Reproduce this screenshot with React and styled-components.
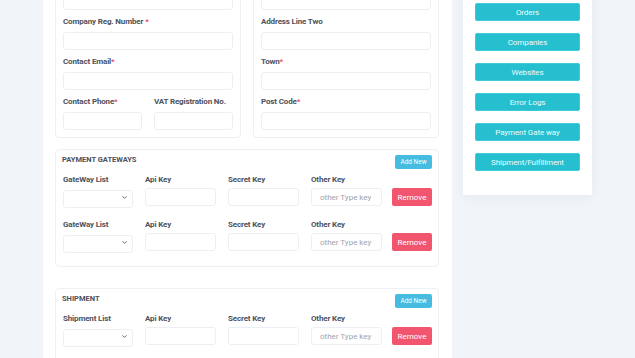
import React from "react";
import styled, { createGlobalStyle } from "styled-components";
import { ChevronDown } from "lucide-react";

const GlobalStyle = createGlobalStyle`
  * { box-sizing: border-box; }
  body {
    margin: 0;
    background: #f1f4f8;
    font-family: "Roboto", "Noto Sans", sans-serif;
    overflow: hidden;
  }
`;

const Page = styled.div`
  display: flex;
  align-items: flex-start;
  gap: 11px;
  padding: 0 43px;
  margin-top: -44px;
`;

const Main = styled.div`
  width: 409px;
  background: #fff;
  padding: 12px 13px 40px 12px;
  display: flex;
  flex-direction: column;
`;

const TwoCols = styled.div`
  display: grid;
  grid-template-columns: minmax(0, 1fr) minmax(0, 1fr);
  gap: 12px;
`;

const Card = styled.div`
  border: 1px solid #edf0f4;
  border-radius: 4px;
  padding: ${(p) => p.$pad || "7px"};
  margin-top: ${(p) => p.$mt || 0}px;
  display: flex;
  flex-direction: column;
  gap: ${(p) => p.$gap || 0}px;
`;

const Field = styled.div`
  display: flex;
  flex-direction: column;
  min-width: 0;
`;

const Label = styled.label`
  font-family: "Roboto", sans-serif;
  font-size: 8px;
  line-height: 12px;
  font-weight: 700;
  letter-spacing: -0.15px;
  color: #4d525c;
  margin-bottom: ${(p) => p.$mb || 4}px;
  white-space: nowrap;
`;

const Req = styled.span`
  color: #f0506e;
  margin-left: ${(p) => (p.$space ? 2 : 0)}px;
`;

const Input = styled.input`
  height: 18px;
  width: 100%;
  border: 1px solid #eceff3;
  border-radius: 3px;
  background: #fff;
  padding: 0 8px;
  font-family: "Roboto", sans-serif;
  font-size: 8px;
  outline: none;
  &::placeholder { color: #9fa3aa; }
`;

const SplitRow = styled.div`
  display: grid;
  grid-template-columns: minmax(0, 1fr) minmax(0, 1fr);
  gap: 12px;
`;

const SelectWrap = styled.div`
  position: relative;
  height: 18px;
  svg {
    position: absolute;
    right: 5px;
    top: 6px;
    color: #555;
    pointer-events: none;
  }
`;

const Select = styled.select`
  appearance: none;
  width: 100%;
  height: 18px;
  border: 1px solid #eceff3;
  border-radius: 3px;
  background: #fff;
  outline: none;
`;

const CardHead = styled.div`
  display: flex;
  justify-content: space-between;
  align-items: flex-start;
`;

const CardTitle = styled.h4`
  margin: 0 0 0 -1px;
  font-family: "Roboto", sans-serif;
  font-size: 7.5px;
  line-height: 10px;
  font-weight: 700;
  color: #4b505c;
`;

const Btn = styled.button`
  flex-shrink: 0;
  border: none;
  border-radius: 2px;
  color: #fff;
  font-family: "Roboto", sans-serif;
  cursor: pointer;
  padding: 0;
  background: ${(p) => p.$bg};
  width: ${(p) => p.$w}px;
  height: ${(p) => p.$h}px;
  font-size: ${(p) => p.$fs}px;
`;

const KeyRow = styled.div`
  display: grid;
  grid-template-columns: 70px 71px 71px 71px minmax(0, 1fr);
  column-gap: 12px;
  align-items: end;
`;

const RemoveCell = styled.div`
  display: flex;
  justify-content: flex-end;
`;

const Rows = styled.div`
  display: flex;
  flex-direction: column;
  gap: 13px;
  margin-top: 5px;
`;

const Side = styled.div`
  width: 129px;
  background: #fff;
  padding: 17px 12px 24px;
  display: flex;
  flex-direction: column;
  gap: 12px;
  box-shadow: 0 3px 12px rgba(40, 60, 90, 0.05);
`;

const SideBtn = styled.button`
  height: 18px;
  border: 1px solid #3fcad8;
  border-radius: 2px;
  background: #25bfcf;
  color: #eefbfc;
  font-family: "Roboto", sans-serif;
  font-size: 8px;
  letter-spacing: -0.1px;
  padding: 0;
`;

const sideItems = ["Dashboard", "Orders", "Companies", "Websites", "Error Logs", "Payment Gate way", "Shipment/Fulfillment"];

function TextField({ label, req, space }) {
  return (
    <Field>
      <Label>
        {label}
        {req && <Req $space={space}>*</Req>}
      </Label>
      <Input />
    </Field>
  );
}

function KeyLine({ listLabel }) {
  return (
    <KeyRow>
      <Field>
        <Label $mb={2}>{listLabel}</Label>
        <SelectWrap>
          <Select />
          <ChevronDown size={7} strokeWidth={3} />
        </SelectWrap>
      </Field>
      <Field>
        <Label $mb={2}>Api Key</Label>
        <Input />
      </Field>
      <Field>
        <Label $mb={2}>Secret Key</Label>
        <Input />
      </Field>
      <Field>
        <Label $mb={2}>Other Key</Label>
        <Input placeholder="other Type key" />
      </Field>
      <RemoveCell>
        <Btn $bg="#f2566f" $w={40} $h={18} $fs={8}>Remove</Btn>
      </RemoveCell>
    </KeyRow>
  );
}

function KeysCard({ title, listLabel, rows, mt }) {
  return (
    <Card $mt={mt} $pad="5px 6px 15px 7px">
      <CardHead>
        <CardTitle>{title}</CardTitle>
        <Btn $bg="#46bce1" $w={37} $h={14} $fs={6.5}>Add New</Btn>
      </CardHead>
      <Rows>
        {Array.from({ length: rows }).map((_, i) => (
          <KeyLine key={i} listLabel={listLabel} />
        ))}
      </Rows>
    </Card>
  );
}

export default function App() {
  return (
    <>
      <GlobalStyle />
      <Page>
        <Main>
          <TwoCols>
            <Card $pad="7px" $gap={6}>
              <TextField label="Company Name" req space />
              <TextField label="Company Reg. Number" req space />
              <TextField label="Contact Email" req />
              <SplitRow>
                <TextField label="Contact Phone" req />
                <TextField label="VAT Registration No." />
              </SplitRow>
            </Card>
            <Card $pad="7px" $gap={6}>
              <TextField label="Address Line One" req />
              <TextField label="Address Line Two" />
              <TextField label="Town" req />
              <TextField label="Post Code" req />
            </Card>
          </TwoCols>
          <KeysCard title="PAYMENT GATEWAYS" listLabel="GateWay List" rows={2} mt={11} />
          <KeysCard title="SHIPMENT" listLabel="Shipment List" rows={2} mt={21} />
        </Main>
        <Side>
          {sideItems.map((s) => (
            <SideBtn key={s}>{s}</SideBtn>
          ))}
        </Side>
      </Page>
    </>
  );
}
